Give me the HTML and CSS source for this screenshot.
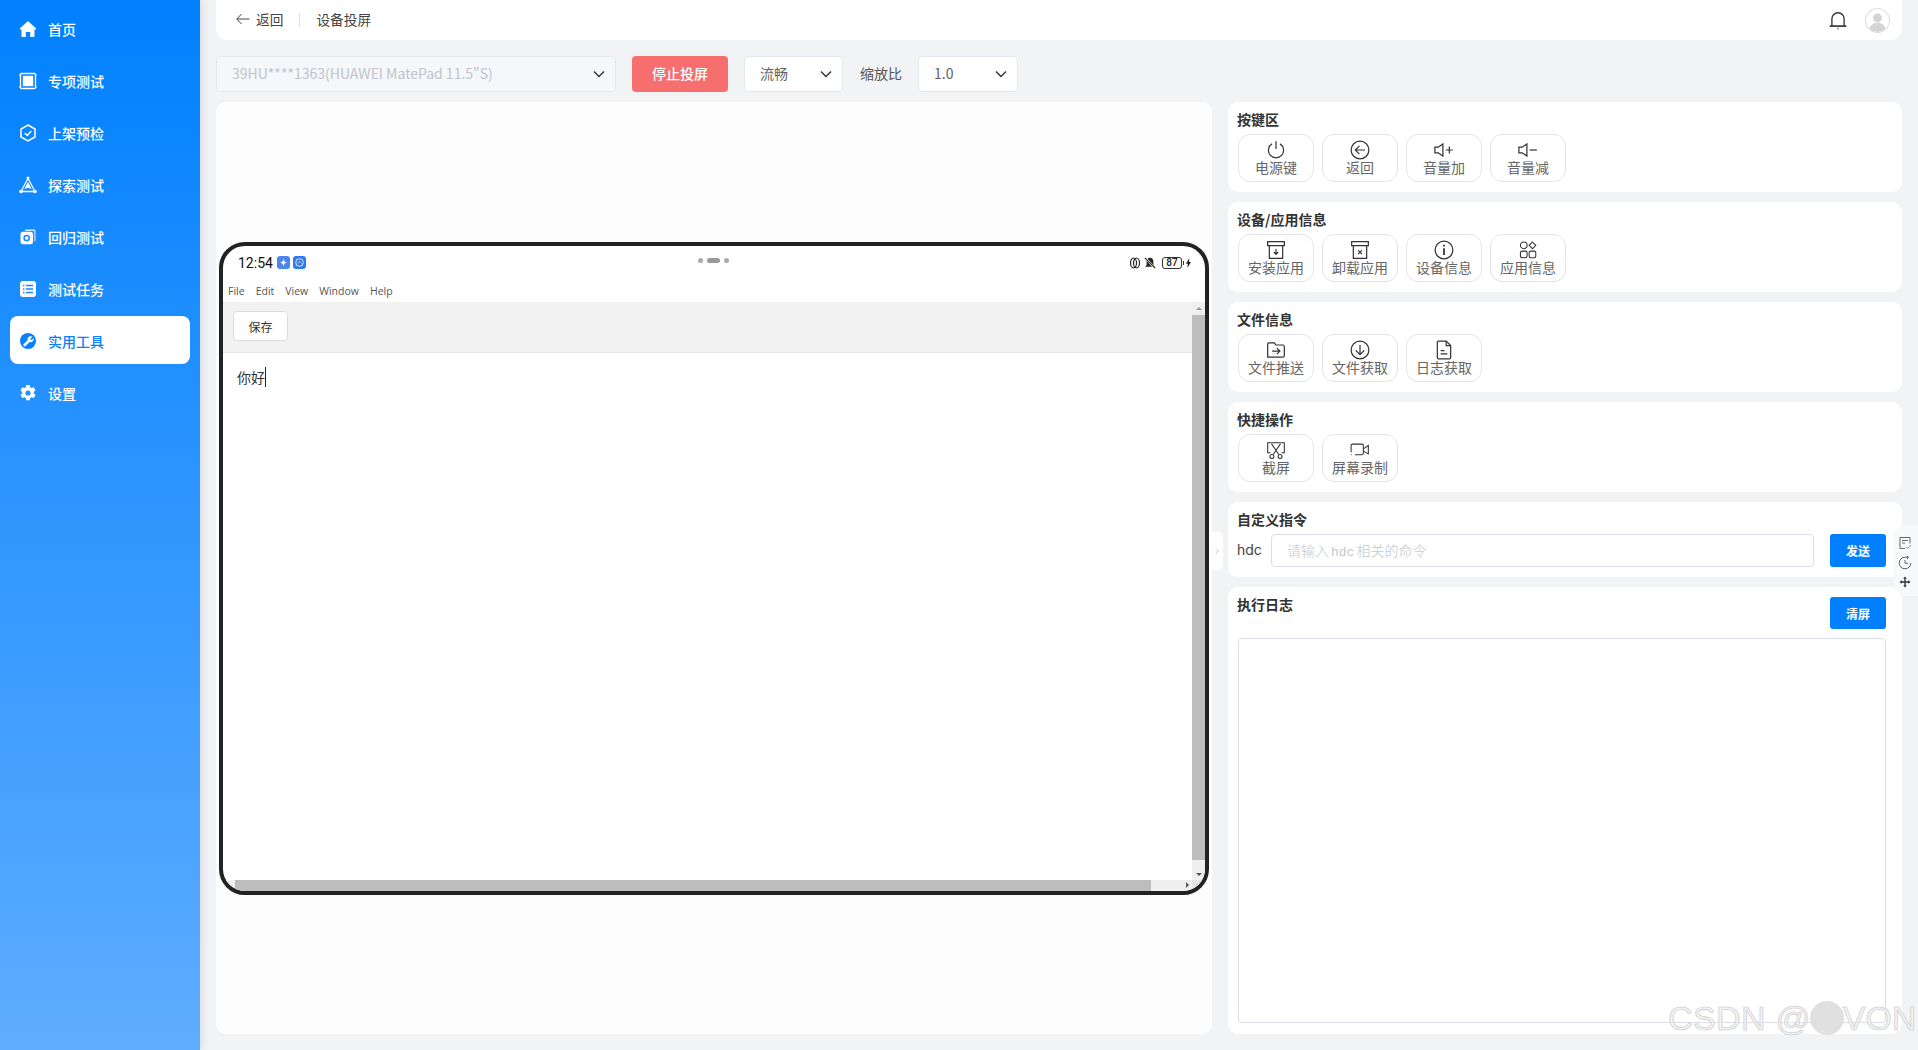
FILE: index.html
```html
<!DOCTYPE html>
<html lang="zh-CN">
<head>
<meta charset="utf-8">
<title>设备投屏</title>
<link rel="stylesheet" href="styles.css">
</head>
<body>
<div class="app">
  <aside class="sidebar">
    <a class="nav"><svg class="nav-ic" viewBox="0 0 18 18"><path fill="#fff" d="M9 1 .8 8.600c-.3.3-.1.9.3.9H2.500V16c0 .6.400 1 1 1h3.300v-5h4.400v5h3.300c.6 0 1-.4 1-1V9.500h1.400c.4 0 .6-.6.3-.9z"/></svg><span>首页</span></a>
    <a class="nav"><svg class="nav-ic" viewBox="0 0 18 18"><rect x="1.500" y="1.500" width="15" height="15" rx="1" fill="none" stroke="#fff" stroke-width="1.300"/><rect x="3.800" y="3.800" width="10.400" height="10.400" fill="#fff"/><path stroke="#fff" stroke-width="1.200" d="M0 3h1.500M0 15h1.500M16.500 3H18M16.500 15H18"/></svg><span>专项测试</span></a>
    <a class="nav"><svg class="nav-ic" viewBox="0 0 18 18" fill="none" stroke="#fff"><path stroke-width="1.500" d="M9 1 16 5v8l-7 4-7-4V5z"/><path stroke-width="1.500" d="m5.700 9 2.500 2.400 4.200-4.300"/></svg><span>上架预检</span></a>
    <a class="nav"><svg class="nav-ic" viewBox="0 0 18 18"><path fill="none" stroke="#fff" stroke-width="1.300" d="M9 2.500 2 15.500h14z"/><path fill="#fff" d="M9 6 12.700 13 9 11.800 5.300 13z"/><circle cx="9" cy="2" r="1.500" fill="#fff"/><circle cx="2" cy="15.500" r="1.800" fill="#fff"/><circle cx="16" cy="15.500" r="1.800" fill="#fff"/></svg><span>探索测试</span></a>
    <a class="nav"><svg class="nav-ic" viewBox="0 0 18 18"><path fill="#cfe4ff" d="M6 1.500h9c.8 0 1.500.7 1.500 1.500v9c0 .8-.5 1.500-1.200 1.500V4c0-.5-.3-.9-.8-.9H6z"/><rect x="1.500" y="3.800" width="12.500" height="12.500" rx="2.500" fill="#fff"/><circle cx="7.700" cy="10" r="2.600" fill="none" stroke="#1a85ff" stroke-width="1.500"/></svg><span>回归测试</span></a>
    <a class="nav"><svg class="nav-ic" viewBox="0 0 18 18"><rect x="1" y="1" width="16" height="16" rx="3" fill="#fff"/><path stroke="#1e88ff" stroke-width="1.500" d="M4 5.500h1.500M7 5.500h7M4 9h1.500M7 9h7M4 12.500h1.500M7 12.500h7"/></svg><span>测试任务</span></a>
    <a class="nav nav-on"><svg class="nav-ic" viewBox="0 0 18 18"><circle cx="9" cy="9" r="8" fill="#0a80ff"/><path fill="#fff" d="M13.600 4.600 11.500 6.700l.2 1.100 1.100.2 2-2c.2 1.400-.2 2.700-1.300 3.500-.9.700-2 .8-3 .5l-3.900 4a1.300 1.300 0 0 1-1.900-1.900l4-3.900c-.3-1-.1-2.200.6-3 .9-1 2.200-1.300 3.400-.6z"/></svg><span>实用工具</span></a>
    <a class="nav"><svg class="nav-ic" viewBox="0 0 18 18"><path fill="#fff" fill-rule="evenodd" d="M7.300 1h3.400l.5 2.200 1.400.8 2.200-.7 1.700 3-1.700 1.500v1.600l1.700 1.500-1.700 3-2.200-.7-1.400.8-.5 2.200H7.300l-.5-2.200-1.400-.8-2.200.7-1.700-3 1.700-1.500V8.200L1.500 6.300l1.700-3 2.200.7 1.400-.8zM9 6.400a2.600 2.600 0 1 0 0 5.200 2.600 2.600 0 0 0 0-5.200z"/></svg><span>设置</span></a>
  </aside>

  <main class="content">
    <header class="topbar">
      <div class="crumbs">
        <svg class="back-ic" viewBox="0 0 14 12" fill="none" stroke="#444" stroke-width="1"><path d="M13.500 6H.800M5.500 1 .8 6l4.700 5"/></svg>
        <span>返回</span><i class="crumb-div"></i><span class="crumb-title">设备投屏</span>
      </div>
      <div class="top-right">
        <svg class="bell" viewBox="0 0 18 18" fill="none" stroke="#333" stroke-width="1.200"><path d="M3.500 14.500V8a5.500 5.500 0 0 1 11 0v6.500"/><path stroke-width="1.500" d="M1.500 14.500h15"/><path d="M8.500 16.800h1"/></svg>
        <svg class="avatar" viewBox="0 0 24 24"><circle cx="12" cy="12" r="11.500" fill="#fff" stroke="#ddd"/><circle cx="12" cy="9.500" r="4.300" fill="#d4d4d4"/><path fill="#d4d4d4" d="M4.500 20c.6-3.800 3.500-5.700 7.500-5.700s6.900 1.900 7.500 5.700a11 11 0 0 1-15 0z"/></svg>
      </div>
    </header>

    <section class="controls">
      <div class="select select-device"><span>39HU****1363(HUAWEI MatePad 11.5"S)</span><svg class="chev" viewBox="0 0 12 8"><path d="M1 1.500 6 6.500l5-5"/></svg></div>
      <button class="btn-stop">停止投屏</button>
      <div class="select select-quality"><span>流畅</span><svg class="chev" viewBox="0 0 12 8"><path d="M1 1.500 6 6.500l5-5"/></svg></div>
      <span class="ctl-label">缩放比</span>
      <div class="select select-zoom"><span>1.0</span><svg class="chev" viewBox="0 0 12 8"><path d="M1 1.500 6 6.500l5-5"/></svg></div>
    </section>

    <section class="workspace">
      <div class="screen-panel">
        <div class="device">
          <div class="status">
            <div class="status-left">
              <span class="clock">12:54</span>
              <svg class="app-ic" viewBox="0 0 13 13"><rect width="13" height="13" rx="3" fill="#4d86e8"/><path fill="#fff" d="m6.500 3 1 2.400 2.300 1-2.300 1-1 2.600-1-2.600-2.300-1 2.300-1z"/></svg>
              <svg class="app-ic" viewBox="0 0 13 13"><rect width="13" height="13" rx="3" fill="#2f7cf0"/><circle cx="6.500" cy="6.500" r="3.800" fill="none" stroke="#dbe8ff"/><path fill="none" stroke="#dbe8ff" stroke-width=".8" d="M4.500 7.500 6.500 5.500l2 2"/></svg>
            </div>
            <div class="handle"><i></i><b></b><i></i></div>
            <div class="status-right">
              <svg class="st-ic" viewBox="0 0 12 12" fill="none" stroke="#222" stroke-width="1.200"><ellipse cx="4.500" cy="6" rx="3" ry="5"/><ellipse cx="7.500" cy="6" rx="3" ry="5"/></svg>
              <svg class="st-ic" viewBox="0 0 12 12"><path fill="#222" d="M6 .8c2 0 3.400 1.500 3.400 3.700V8l1.500 1.800H1.100L2.600 8V4.500C2.600 2.300 4 .8 6 .8z"/><path stroke="#fff" stroke-width="2" d="m1.500 1 9 10"/><path stroke="#222" stroke-width="1.100" d="m.8 .8 10.400 10.400"/></svg>
              <span class="battery">87</span><i class="batt-tip"></i>
              <svg class="bolt" viewBox="0 0 6 12"><path fill="#222" d="M4 0 0 7h2.300L1.700 12 6 4.800H3.600z"/></svg>
            </div>
          </div>
          <nav class="menubar"><span>File</span><span>Edit</span><span>View</span><span>Window</span><span>Help</span></nav>
          <div class="doc">
            <div class="doc-main">
              <div class="doc-toolbar"><button class="btn-save">保存</button></div>
              <div class="doc-text"><span class="typed">你好</span></div>
            </div>
            <div class="vscroll"><i class="arr arr-up"></i><div class="vthumb"></div><i class="arr arr-down"></i></div>
          </div>
          <div class="hscroll"><i class="hcap"></i><div class="hthumb"></div><div class="htrack"><i class="arr-right"></i></div><i class="hcorner"></i></div>
        </div>
      </div>

      <div class="side">
        <div class="card">
          <h3 class="card-title">按键区</h3>
          <div class="keys">
            <button class="key"><svg class="key-ic" viewBox="0 0 18 18"><path d="M9 1.200v7M5.400 3.500a6.800 6.800 0 1 0 7.200 0"/></svg><span>电源键</span></button>
            <button class="key"><svg class="key-ic" viewBox="0 0 18 18"><circle cx="9" cy="9" r="8"/><path d="M13.500 9H5M8.500 5.300 4.800 9l3.700 3.700"/></svg><span>返回</span></button>
            <button class="key"><svg class="key-ic" viewBox="0 0 18 18"><path d="M.8 6.500h3L8 3.500v11l-4.200-3h-3z"/><path d="M10.500 9h6.500M13.800 5.800v6.400"/></svg><span>音量加</span></button>
            <button class="key"><svg class="key-ic" viewBox="0 0 18 18"><path d="M.8 6.500h3L8 3.500v11l-4.200-3h-3z"/><path d="M10.500 9h6.500"/></svg><span>音量减</span></button>
          </div>
        </div>
        <div class="card">
          <h3 class="card-title">设备/应用信息</h3>
          <div class="keys">
            <button class="key"><svg class="key-ic" viewBox="0 0 18 18"><path d="M1.500 1.500h15v3.500h-15zM3 5v11.500h12V5"/><path d="M9 8v4.500M7 10.800 9 13l2-2.200"/></svg><span>安装应用</span></button>
            <button class="key"><svg class="key-ic" viewBox="0 0 18 18"><path d="M1.500 1.500h15v3.500h-15zM3 5v11.500h12V5"/><path d="m7.300 9.300 3.400 3.400M10.700 9.300l-3.400 3.400"/></svg><span>卸载应用</span></button>
            <button class="key"><svg class="key-ic" viewBox="0 0 18 18"><circle cx="9" cy="9" r="8"/><path stroke-width="1.600" d="M9 7.500v6M9 4.200v1.600"/></svg><span>设备信息</span></button>
            <button class="key"><svg class="key-ic key-ic-thin" viewBox="0 0 18 18"><circle cx="5.200" cy="4.800" r="3"/><path d="m13 1.800 3 3-3 3-3-3z"/><rect x="2.200" y="10" width="6" height="6" rx="1.500"/><rect x="10" y="10" width="6" height="6" rx="1.500"/></svg><span>应用信息</span></button>
          </div>
        </div>
        <div class="card">
          <h3 class="card-title">文件信息</h3>
          <div class="keys">
            <button class="key"><svg class="key-ic" viewBox="0 0 18 18"><path d="M1.500 15.500V3.500c0-.6.400-1 1-1h5l1.500 2h6c.8 0 1.500.7 1.500 1.500v8c0 1-.7 1.500-1.500 1.500z"/><path d="M5.500 10h7M9.800 7.300 12.500 10l-2.700 2.700"/></svg><span>文件推送</span></button>
            <button class="key"><svg class="key-ic" viewBox="0 0 18 18"><circle cx="9" cy="9" r="8"/><path d="M9 4.500v8.500M5.300 9.500 9 13.200l3.700-3.700"/></svg><span>文件获取</span></button>
            <button class="key"><svg class="key-ic" viewBox="0 0 18 18"><path d="M3 2c0-.5.400-1 1-1h7l4 4v11c0 .6-.4 1-1 1H4c-.6 0-1-.4-1-1z"/><path d="M11 1v4h4M6 9.500h3.500M6 12.500h6"/></svg><span>日志获取</span></button>
          </div>
        </div>
        <div class="card">
          <h3 class="card-title">快捷操作</h3>
          <div class="keys">
            <button class="key"><svg class="key-ic key-ic-thin" viewBox="0 0 18 18"><path d="M4 11.500H1.500V2.500h15v9H14"/><path d="m5 3.500 6.500 9.500M13 3.500 6.500 13"/><circle cx="5.300" cy="14.800" r="1.800"/><circle cx="12.700" cy="14.800" r="1.800"/></svg><span>截屏</span></button>
            <button class="key"><svg class="key-ic key-ic-thin" viewBox="0 0 18 18"><path d="M1 11V5c0-.8.500-1.300 1.300-1.300h8.400c.8 0 1.300.5 1.300 1.300v7c0 .8-.5 1.300-1.300 1.300H4.500"/><path d="m12 8 4.500-3v7.500L12 10M1 13.300h.6"/></svg><span>屏幕录制</span></button>
          </div>
        </div>
        <div class="card">
          <h3 class="card-title">自定义指令</h3>
          <div class="cmd-row">
            <span class="cmd-label">hdc</span>
            <div class="cmd-input">请输入<span class="mono">hdc</span>相关的命令</div>
            <button class="btn-primary">发送</button>
          </div>
        </div>
        <div class="card card-log">
          <div class="log-head"><h3 class="card-title">执行日志</h3><button class="btn-primary">清屏</button></div>
          <div class="log-box"></div>
        </div>
      </div>
    </section>
  </main>

  <div class="collapse-tab"><svg viewBox="0 0 6 10" fill="none" stroke="#aaa"><path d="m1 1 4 4-4 4"/></svg></div>
  <div class="float-bar">
    <svg viewBox="0 0 14 14" fill="none" stroke="#666"><path d="M2 12.500V1.500h10v6M4 4.500h6M4 7h3M2 12.500h5"/><path stroke="#999" d="m8 11 1.500 1.500L13 9"/></svg>
    <svg viewBox="0 0 14 14" fill="none" stroke="#666"><path d="M12.800 7A5.800 5.800 0 1 1 7 1.200h4"/><path d="M7 4v3.300h3M9.500 0v3"/></svg>
    <svg viewBox="0 0 14 14" fill="none" stroke="#333" stroke-width="1.300"><path d="M7 3v8M3 7h8"/><path fill="#333" stroke="none" d="M7 1.500 8.800 3.800H5.200zM7 12.500 5.200 10.200h3.600zM1.500 7 3.800 5.200v3.600zM12.500 7 10.200 8.800V5.200z"/></svg>
  </div>
  <div class="watermark"><span class="wm-a">CSDN @</span><i class="wm-dot"></i><span>VON</span></div>
</div>
</body>
</html>
```

FILE: styles.css
```css
* { box-sizing: border-box; }
html, body { margin: 0; height: 100%; overflow: hidden; }
body {
  font-family: "Noto Sans CJK SC", "Noto Sans", sans-serif;
  font-size: 14px;
  color: #333;
  background: #f2f3f5;
}
button { font: inherit; cursor: pointer; }
h3 { margin: 0; }

.app { position: relative; display: flex; width: 1918px; height: 1050px; overflow: hidden; }

/* sidebar */
.sidebar {
  flex: 0 0 200px;
  padding: 4px 10px 0;
  background: linear-gradient(180deg, #0080ff 0%, #5fadff 100%);
  box-shadow: 2px 0 8px rgba(30, 50, 90, .12);
  display: flex;
  flex-direction: column;
  gap: 4px;
  position: relative;
}
.nav {
  height: 48px;
  display: flex;
  align-items: center;
  gap: 11px;
  padding: 2px 0 0 9px;
  color: #fff;
  font-weight: 500;
  border-radius: 8px;
}
.nav-ic { width: 18px; height: 18px; flex: none; }
.nav-on { background: #fff; color: #0a80ff; }

/* content */
.content { flex: 1; min-width: 0; display: flex; flex-direction: column; padding: 0 16px 16px; }
.topbar {
  flex: 0 0 40px;
  background: #fff;
  border-radius: 0 0 12px 12px;
  display: flex;
  align-items: center;
  justify-content: space-between;
  padding: 0 12px 0 20px;
}
.crumbs { display: flex; align-items: center; color: #444; font-size: 13.700px; padding-bottom: 2px; }
.back-ic { width: 14px; height: 12px; margin-right: 6px; }
.crumb-div { width: 1px; height: 14px; margin: 1px 16px 0; background: #dcdfe6; }
.top-right { display: flex; align-items: center; gap: 17px; }
.bell { width: 20px; height: 20px; }
.avatar { width: 25px; height: 25px; }

.controls { flex: 0 0 36px; margin: 16px 0 10px; display: flex; align-items: center; }
.select {
  height: 36px;
  display: flex;
  align-items: center;
  justify-content: space-between;
  border: 1px solid #e4e7ed;
  border-radius: 4px;
  background: #fff;
  color: #606266;
  padding: 0 10px 2px 15px;
}
.select-device { width: 400px; background: #f5f7fa; color: #c0c4cc; margin-right: 16px; }
.select-quality { width: 99px; }
.select-zoom { width: 100px; }
.chev { width: 12px; height: 8px; margin-top: 2px; fill: none; stroke: #333; stroke-width: 1.400; }
.btn-stop {
  width: 96px;
  height: 36px;
  margin-right: 16px;
  padding: 0 0 2px;
  border: 0;
  border-radius: 4px;
  background: #f66e6e;
  color: #fff;
  font-weight: 500;
}
.ctl-label { margin: 0 16px 2px 17px; color: #555; }

.workspace { flex: 1; min-height: 0; display: flex; gap: 16px; }
.screen-panel {
  flex: 0 0 996px;
  background: #fdfdfd;
  border-radius: 10px;
  display: flex;
  align-items: center;
  justify-content: center;
}

/* mirrored device */
.device {
  width: 990px;
  height: 653px;
  border: 4px solid #222;
  border-radius: 26px;
  background: #fff;
  overflow: hidden;
  display: flex;
  flex-direction: column;
  font-family: "Open Sans", "Noto Sans CJK SC", sans-serif;
}
.status {
  flex: 0 0 34px;
  display: flex;
  align-items: center;
  justify-content: space-between;
  padding: 0 14px 0 15px;
  position: relative;
}
.status-left, .status-right { display: flex; align-items: center; }
.clock { font-family: "Roboto", sans-serif; font-size: 14px; font-weight: 400; color: #111; margin-right: 4px; }
.app-ic { width: 13px; height: 13px; margin-right: 3px; }
.handle { position: absolute; left: 475px; top: 12px; display: flex; align-items: center; gap: 4px; }
.handle i { width: 5px; height: 5px; border-radius: 50%; background: #aaa; }
.handle b { width: 13px; height: 5px; border-radius: 3px; background: #999; }
.st-ic { width: 12px; height: 12px; margin-right: 3px; }
.battery {
  width: 20px;
  height: 12px;
  margin-left: 3px;
  border: 1px solid #333;
  border-radius: 3px;
  font: 500 10px/10px "Roboto", sans-serif;
  text-align: center;
  color: #222;
}
.batt-tip { width: 1px; height: 4px; margin: 0 2px 0 1px; background: #333; }
.bolt { width: 5px; height: 10px; }
.menubar {
  flex: 0 0 22px;
  display: flex;
  align-items: center;
  gap: 11px;
  padding: 0 0 0 5px;
  font-size: 10.500px;
  color: #555;
}
.doc { flex: 1; min-height: 0; display: flex; }
.doc-main { flex: 1; min-width: 0; display: flex; flex-direction: column; }
.doc-toolbar {
  flex: 0 0 51px;
  background: #f2f2f2;
  border-bottom: 1px solid #e6e6e6;
  display: flex;
  align-items: center;
  padding: 0 10px 1px;
}
.btn-save {
  width: 55px;
  height: 30px;
  padding: 0;
  border: 1px solid #dcdcdc;
  border-radius: 4px;
  background: #fff;
  color: #333;
  font-family: "Noto Sans CJK SC", sans-serif;
  font-size: 12px;
}
.doc-text { padding: 13px 14px; font-family: "Noto Sans CJK SC", sans-serif; font-size: 14px; line-height: 22px; color: #333; }
.typed { border-right: 1.500px solid #222; }
.vscroll {
  flex: 0 0 13px;
  background: #efefef;
  display: flex;
  flex-direction: column;
  align-items: center;
}
.arr { flex: 0 0 13px; width: 0; height: 0; }
.arr-up { flex-basis: 0; border: 3px solid transparent; border-top: 0; border-bottom: 3px solid #999; margin: 5px 0 5px; }
.arr-down { flex-basis: 0; border: 3.500px solid transparent; border-bottom: 0; border-top: 3.500px solid #555; margin: 5px 0 4px; }
.vthumb { flex: 1; width: 100%; background: #bdbdbd; margin-bottom: 8px; }
.hscroll { flex: 0 0 11px; display: flex; background: #efefef; }
.hcap { flex: 0 0 12px; }
.hthumb { flex: 0 0 916px; background: #bdbdbd; }
.htrack { flex: 1; display: flex; align-items: center; justify-content: flex-end; padding-right: 3px; }
.arr-right { width: 0; height: 0; border: 3.500px solid transparent; border-right: 0; border-left: 3.500px solid #555; }
.hcorner { flex: 0 0 13px; background: #e4e4e4; }

/* right column */
.side { flex: 1; min-width: 0; display: flex; flex-direction: column; gap: 10px; }
.card { background: #fff; border-radius: 10px; padding: 7px 16px 10px 10px; }
.card-title { font-size: 14px; line-height: 20px; font-weight: 700; color: #333; margin-left: -1px; }
.keys { display: flex; gap: 8px; margin-top: 5px; }
.key {
  width: 76px;
  height: 48px;
  padding: 5px 0 0;
  border: 1px solid #e3e3ea;
  border-radius: 12px;
  background: #fff;
  color: #666;
  display: flex;
  flex-direction: column;
  align-items: center;
  line-height: 20px;
}
.key-ic { width: 20px; height: 20px; flex: none; fill: none; stroke: #333; stroke-width: 1.100; margin-bottom: -3px; }
.key-ic-thin { stroke-width: .95; }
.cmd-row { display: flex; align-items: flex-start; margin-top: 5px; }
.cmd-label { width: 33px; margin-left: -1px; margin-right: 1px; line-height: 32px; color: #444; font-family: "Inter", sans-serif; font-size: 14px; }
.cmd-input {
  flex: 1;
  height: 33px;
  margin-right: 16px;
  padding: 0 15px;
  border: 1px solid #dcdfe6;
  border-radius: 4px;
  color: #c4c7cf;
  font-weight: 300;
  line-height: 30px;
}
.mono { font-family: "Liberation Mono", monospace; font-size: 13px; margin: 0 2px; }
.btn-primary {
  flex: none;
  width: 56px;
  height: 33px;
  padding: 0;
  border: 0;
  border-radius: 3px;
  background: #0080ff;
  color: #fff;
  font-size: 12px;
  font-weight: 700;
}
.card-log { flex: 1; min-height: 0; display: flex; flex-direction: column; padding-bottom: 11px; }
.log-head { display: flex; justify-content: space-between; align-items: flex-start; }
.log-head .btn-primary { margin-top: 3px; height: 32px; }
.log-box { flex: 1; margin-top: 9px; border: 1px solid #dcdfe6; border-radius: 4px; }

/* overlays */
.collapse-tab {
  position: absolute;
  left: 1210px;
  top: 532px;
  width: 13px;
  height: 38px;
  background: #fff;
  border-radius: 0 5px 5px 0;
  display: flex;
  align-items: center;
  justify-content: center;
}
.collapse-tab svg { width: 4px; height: 8px; }
.float-bar {
  position: absolute;
  left: 1894px;
  top: 525px;
  width: 24px;
  height: 71px;
  padding: 11px 0 7px 4px;
  background: #f8f9fa;
  border-radius: 12px 0 0 12px;
  display: flex;
  flex-direction: column;
  justify-content: space-between;
}
.float-bar svg { width: 14px; height: 14px; }
.watermark {
  position: absolute;
  left: 1668px;
  top: 999px;
  display: flex;
  align-items: center;
  font: 34px/38px "Liberation Sans", sans-serif;
  color: #f2f2f2;
  -webkit-text-stroke: .6px #c6c6c6;
  white-space: nowrap;
  pointer-events: none;
}
.wm-a { letter-spacing: .4px; }
.wm-dot { width: 34px; height: 34px; margin: 0 -1px 0 -1px; border-radius: 50%; background: #e0e0e0; }
```
